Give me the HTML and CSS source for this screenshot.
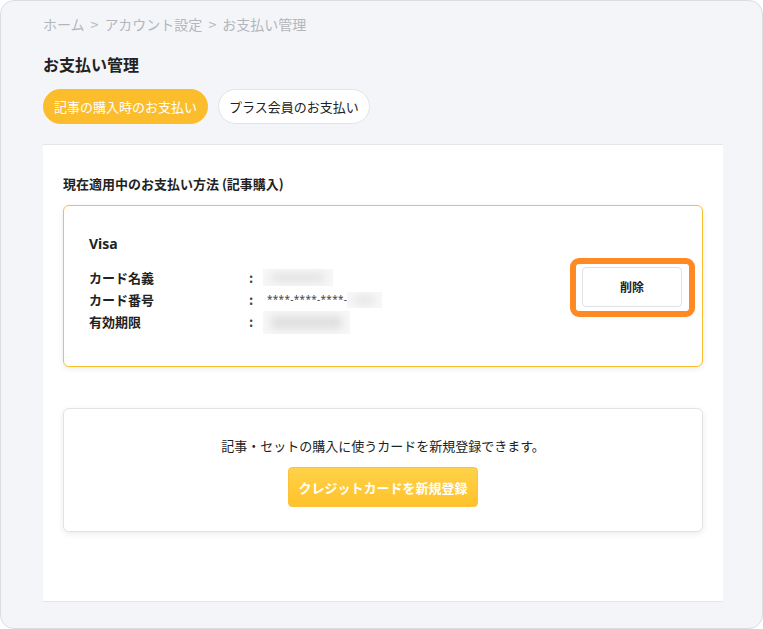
FILE: index.html
```html
<!DOCTYPE html>
<html lang="ja">
<head>
<meta charset="utf-8">
<title>お支払い管理</title>
<link rel="stylesheet" href="styles.css">
</head>
<body>
<div class="frame">
  <nav class="crumbs"><span>ホーム</span><span class="sep">&gt;</span><span>アカウント設定</span><span class="sep">&gt;</span><span>お支払い管理</span></nav>
  <h1 class="title">お支払い管理</h1>
  <div class="tabs">
    <span class="tab tab-active">記事の購入時のお支払い</span>
    <span class="tab">プラス会員のお支払い</span>
  </div>
  <section class="panel">
    <h2 class="section-label">現在適用中のお支払い方法 (記事購入)</h2>
    <div class="card card-current">
      <div class="card-info">
        <div class="brand">Visa</div>
        <div class="rows">
          <div class="row"><span class="label">カード名義</span><span class="colon">:</span><span class="blur blur-name"></span></div>
          <div class="row"><span class="label">カード番号</span><span class="colon">:</span><span class="masked">****-****-****-</span><span class="blur blur-last"></span></div>
          <div class="row"><span class="label">有効期限</span><span class="colon">:</span><span class="blur blur-exp"></span></div>
        </div>
      </div>
      <div class="delete-wrap">
        <button class="btn-delete">削除</button>
        <span class="highlight"></span>
      </div>
    </div>
    <div class="card card-new">
      <p class="new-text">記事・セットの購入に使うカードを新規登録できます。</p>
      <button class="btn-register">クレジットカードを新規登録</button>
    </div>
  </section>
</div>
</body>
</html>
```
FILE: styles.css
```css
* { box-sizing: border-box; }
html, body { margin: 0; padding: 0; background: #ffffff; }
body {
  font-family: "Noto Sans CJK JP", "Noto Sans", sans-serif;
  color: #222;
}
.frame {
  width: 763px;
  height: 629px;
  background: #f4f5f9;
  border: 1px solid #dcdde1;
  border-radius: 14px;
  padding: 13px 39px 0 42px;
}
.crumbs {
  font-size: 14px;
  line-height: 20px;
  color: #b3b6bc;
  display: flex;
}
.sep {
  margin: 0 6px;
}
.title {
  margin: 19px 0 0;
  font-size: 16px;
  line-height: 22px;
  font-weight: 700;
  color: #222;
}
.tabs {
  display: flex;
  gap: 10px;
  margin-top: 14px;
}
.tab {
  display: inline-flex;
  align-items: center;
  height: 35px;
  padding: 0 10px;
  border-radius: 18px;
  font-size: 13px;
  background: #fff;
  border: 1px solid #e2e3e6;
  color: #222;
}
.tab-active {
  background: #fcbd2c;
  border-color: #fcbd2c;
  color: #fff;
  padding: 0 10px;
}
.panel {
  margin-top: 20px;
  width: 680px;
  height: 458px;
  background: #fff;
  border-top: 1px solid #e4e5e8;
  border-bottom: 1px solid #e4e5e8;
  padding: 29px 20px 0;
}
.section-label {
  margin: 0;
  font-size: 13px;
  line-height: 20px;
  font-weight: 700;
  color: #222;
}
.card {
  background: #fff;
  border-radius: 6px;
  box-shadow: 0 2px 6px rgba(0, 0, 0, 0.08);
}
.card-current {
  margin-top: 11px;
  height: 162px;
  border: 1px solid #fbc02e;
  display: flex;
  align-items: center;
  justify-content: space-between;
  padding: 0 20px 0 25px;
}
.card-info { padding-bottom: 6px; }
.brand {
  font-family: "Noto Sans", "Noto Sans CJK JP", sans-serif;
  font-size: 14px;
  font-weight: 700;
  line-height: 20px;
  margin-bottom: 12px;
}
.row {
  display: flex;
  align-items: center;
  height: 22px;
  font-size: 13px;
}
.label {
  width: 160px;
  font-weight: 700;
}
.colon {
  width: 14px;
  font-weight: 700;
  color: #444;
}
.masked {
  font-family: "Noto Sans", sans-serif;
  font-size: 10px;
  color: #444;
  margin-left: 4px;
  letter-spacing: 0.3px;
}
.blur {
  display: inline-block;
  height: 17px;
  background: #f7f7f7;
  position: relative;
  overflow: hidden;
}
.blur::before {
  content: "";
  position: absolute;
  left: 8px; right: 8px; top: 5px; bottom: 5px;
  background: #dedede;
  filter: blur(4px);
  border-radius: 4px;
}
.blur-name { width: 70px; }
.blur-last { width: 35px; height: 16px; margin-top: 2px; }
.blur-exp { width: 87px; height: 23px; margin-top: 2px; }
.delete-wrap {
  position: relative;
  width: 100px;
  height: 40px;
  margin-top: 1px;
}
.btn-delete {
  width: 100px;
  height: 40px;
  background: #fff;
  border: 1px solid #e0e1e4;
  border-radius: 4px;
  font-family: "Noto Sans CJK JP", sans-serif;
  font-size: 12px;
  font-weight: 700;
  color: #222;
}
.highlight {
  position: absolute;
  left: -12px;
  top: -9px;
  width: 125px;
  height: 59px;
  border: 6px solid #ff8a24;
  border-radius: 9px;
  pointer-events: none;
}
.card-new {
  margin-top: 41px;
  height: 124px;
  border: 1px solid #e2e3e6;
  display: flex;
  flex-direction: column;
  align-items: center;
  padding-top: 27px;
}
.new-text {
  margin: 0;
  font-size: 13px;
  line-height: 20px;
  color: #222;
}
.btn-register {
  margin-top: 11px;
  width: 190px;
  height: 40px;
  border: 1px solid #fcc23a;
  border-radius: 4px;
  background: linear-gradient(#ffd248, #ffc22c);
  color: #fff;
  font-family: "Noto Sans CJK JP", sans-serif;
  font-size: 13px;
  font-weight: 700;
}
```
